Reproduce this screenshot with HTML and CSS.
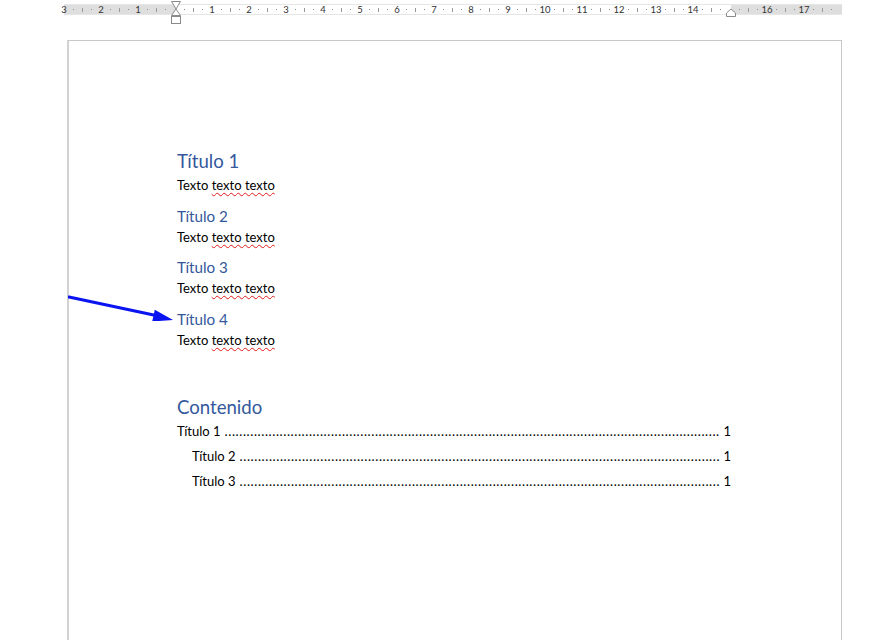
FILE: index.html
```html
<!DOCTYPE html>
<html lang="es">
<head>
<meta charset="utf-8">
<title>Documento</title>
<link rel="stylesheet" href="styles.css">
</head>
<body>
<div class="ruler">
  <div class="band">
    <div class="marks">
      <span class="n">3</span><span class="d"></span><span class="t"></span><span class="d"></span>
      <span class="n">2</span><span class="d"></span><span class="t"></span><span class="d"></span>
      <span class="n">1</span><span class="d"></span><span class="t"></span><span class="d"></span>
      <span class="n"></span><span class="d"></span><span class="t"></span><span class="d"></span>
      <span class="n">1</span><span class="d"></span><span class="t"></span><span class="d"></span>
      <span class="n">2</span><span class="d"></span><span class="t"></span><span class="d"></span>
      <span class="n">3</span><span class="d"></span><span class="t"></span><span class="d"></span>
      <span class="n">4</span><span class="d"></span><span class="t"></span><span class="d"></span>
      <span class="n">5</span><span class="d"></span><span class="t"></span><span class="d"></span>
      <span class="n">6</span><span class="d"></span><span class="t"></span><span class="d"></span>
      <span class="n">7</span><span class="d"></span><span class="t"></span><span class="d"></span>
      <span class="n">8</span><span class="d"></span><span class="t"></span><span class="d"></span>
      <span class="n">9</span><span class="d"></span><span class="t"></span><span class="d"></span>
      <span class="n">10</span><span class="d"></span><span class="t"></span><span class="d"></span>
      <span class="n">11</span><span class="d"></span><span class="t"></span><span class="d"></span>
      <span class="n">12</span><span class="d"></span><span class="t"></span><span class="d"></span>
      <span class="n">13</span><span class="d"></span><span class="t"></span><span class="d"></span>
      <span class="n">14</span><span class="d"></span><span class="t"></span><span class="d"></span>
      <span class="n"></span><span class="d"></span><span class="t"></span><span class="d"></span>
      <span class="n">16</span><span class="d"></span><span class="t"></span><span class="d"></span>
      <span class="n">17</span><span class="d"></span><span class="t"></span><span class="d"></span>
    </div>
  </div>
  <svg class="indent-left" width="12" height="24" viewBox="0 0 12 24">
    <path d="M1.5 0.5 H10.5 L6 8 L10.5 14.5 H1.5 L6 8 Z" fill="#fff" stroke="#8a8a8a" stroke-width="1"/>
    <rect x="1.5" y="15.5" width="9" height="7" fill="#fff" stroke="#8a8a8a" stroke-width="1"/>
  </svg>
  <svg class="indent-right" width="12" height="10" viewBox="0 0 12 10">
    <path d="M6 1 L10.5 5 V8.5 H1.5 V5 Z" fill="#fff" stroke="#8a8a8a" stroke-width="1"/>
  </svg>
</div>

<div class="page">
  <svg class="arrow" width="120" height="40" viewBox="0 0 120 40">
    <line x1="1" y1="16" x2="88" y2="34.5" stroke="#0a14f0" stroke-width="3.2" stroke-linecap="round"/>
    <polygon points="105,39 84.2,40.5 86.8,28.8" fill="#0a14f0"/>
  </svg>
  <h1 class="h1">Título 1</h1>
  <p class="body">Texto <span class="spell">texto texto</span></p>
  <h2 class="h2">Título 2</h2>
  <p class="body">Texto <span class="spell">texto texto</span></p>
  <h2 class="h2">Título 3</h2>
  <p class="body">Texto <span class="spell">texto texto</span></p>
  <h2 class="h2">Título 4</h2>
  <p class="body">Texto <span class="spell">texto texto</span></p>

  <h1 class="h1 toc-head">Contenido</h1>
  <div class="toc">
    <div class="toc-row"><span class="toc-title">Título 1</span><span class="leader"></span><span class="toc-num">1</span></div>
    <div class="toc-row sub"><span class="toc-title">Título 2</span><span class="leader"></span><span class="toc-num">1</span></div>
    <div class="toc-row sub"><span class="toc-title">Título 3</span><span class="leader"></span><span class="toc-num">1</span></div>
  </div>
</div>
</body>
</html>
```

FILE: styles.css
```css
html, body {
  margin: 0;
  padding: 0;
  background: #ffffff;
  overflow: hidden;
  height: 640px;
}

body {
  font-family: Lato, "Open Sans", sans-serif;
}

/* ---------- ruler ---------- */
.ruler {
  position: relative;
  margin-left: 64px;
  width: 778px;
  padding-top: 4px;
  height: 21px;
}

.band {
  height: 11px;
  background: linear-gradient(to right,
    #dedede 0, #dedede 112px,
    #ffffff 112px, #ffffff 667px,
    #dedede 667px, #dedede 778px);
  box-shadow: inset 0 1px 0 #e6e6e6, inset 0 -1px 0 #e6e6e6;
}

.marks {
  display: flex;
  margin-left: -4.631px;
  height: 11px;
}

.marks span {
  flex: 0 0 9.2619px;
  width: 9.2619px;
  height: 11px;
  display: flex;
  align-items: center;
  justify-content: center;
  font-size: 9.5px;
  line-height: 11px;
  color: #333333;
  white-space: nowrap;
}

.marks .d::before {
  content: "";
  width: 1px;
  height: 1px;
  background: #8c8c8c;
}

.marks .t::before {
  content: "";
  width: 1px;
  height: 4px;
  background: #9a9a9a;
}

.indent-left {
  position: absolute;
  left: 106px;
  top: 1px;
}

.indent-right {
  position: absolute;
  left: 661px;
  top: 8px;
}

/* ---------- page ---------- */
.page {
  position: relative;
  margin-left: 67px;
  margin-top: 15px;
  width: 775px;
  height: 700px;
  border: 1px solid #c9c9c9;
  border-left: 2px solid #d2d2d2;
  box-sizing: border-box;
  padding: 108px 110px 0 108px;
}

.arrow {
  position: absolute;
  left: -1px;
  top: 240px;
}

.h1, .h2 {
  margin: 0;
  font-weight: 400;
  color: #34589c;
}

.h1 {
  font-size: 18.6px;
  line-height: 25px;
}

.h2 {
  font-size: 15.2px;
  line-height: 19px;
  margin-top: 11.5px;
}

.body {
  margin: 2px 0 0 0;
  font-size: 13px;
  line-height: 19px;
  color: #000;
}

.h2 + .body {
  margin-top: 2px;
}

.spell {
  text-decoration: underline wavy #e01b1b;
  text-decoration-thickness: 1px;
  text-underline-offset: 2px;
}

.toc-head {
  margin-top: 45px;
}

.toc {
  font-size: 13px;
  color: #000;
  margin-top: 2px;
}

.toc-row {
  display: flex;
  align-items: baseline;
  height: 25px;
  line-height: 19px;
}

.toc-row.sub {
  padding-left: 15px;
}

.toc-title {
  flex: 0 0 auto;
  padding-right: 4px;
}

.leader {
  flex: 1 1 auto;
  overflow: hidden;
  white-space: nowrap;
  letter-spacing: 0.6px;
}

.leader::before {
  content: "........................................................................................................................................................................................................................................................";
}

.toc-num {
  flex: 0 0 auto;
  padding-left: 3px;
}
```
